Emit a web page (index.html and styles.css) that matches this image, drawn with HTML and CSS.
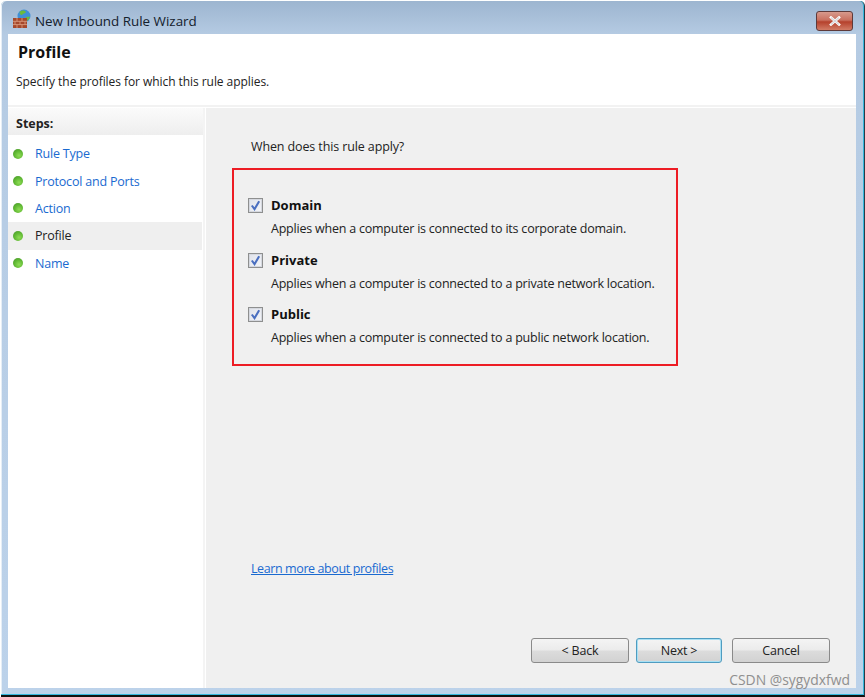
FILE: index.html
```html
<!DOCTYPE html>
<html lang="en">
<head>
<meta charset="utf-8">
<title>New Inbound Rule Wizard</title>
<link rel="stylesheet" href="styles.css">
</head>
<body>
<div class="window">
  <div class="titlebar">
    <svg class="app-icon" width="20" height="20" viewBox="0 0 20 20">
      <circle cx="12" cy="7" r="6.500" fill="#3f8fd8"/>
      <path d="M8 2.500c2-1.500 5-1 6 .5-1 2-3 1-4 3-1.500 0-3-1.500-2-3.500z" fill="#6cbb3c"/>
      <path d="M14 8c2-.500 3.500 0 4-.500-.500 2.500-2 4-3.500 4.500-1-1-1.500-2.500-.5-4z" fill="#6cbb3c"/>
      <rect x="1" y="9" width="14" height="10" fill="#a5482c"/>
      <path d="M1 12.300h14M1 15.600h14M5 9v3.300M10 9v3.300M3 12.300v3.300M8 12.300v3.300M13 12.300v3.300M5 15.600v3.400M10 15.600v3.400" stroke="#e0a184" stroke-width=".8" fill="none"/>
    </svg>
    <span class="title">New Inbound Rule Wizard</span>
    <div class="close">
      <svg width="14" height="10" viewBox="0 0 14 10"><path d="M3 1.500l8 7M11 1.500l-8 7" stroke="#fff" stroke-width="2.600" stroke-linecap="square" fill="none"/><path d="M3 1.500l8 7M11 1.500l-8 7" stroke="#d8d8dc" stroke-width="1.200" fill="none"/></svg>
    </div>
  </div>
  <div class="client">
    <header class="header">
      <h1 class="heading">Profile</h1>
      <p class="subheading">Specify the profiles for which this rule applies.</p>
    </header>
    <div class="body">
      <nav class="sidebar">
        <div class="steps-title">Steps:</div>
        <ul class="steps">
          <li class="step"><i class="dot"></i><a class="step-link">Rule Type</a></li>
          <li class="step"><i class="dot"></i><a class="step-link">Protocol and Ports</a></li>
          <li class="step"><i class="dot"></i><a class="step-link">Action</a></li>
          <li class="step current"><i class="dot"></i><span>Profile</span></li>
          <li class="step"><i class="dot"></i><a class="step-link">Name</a></li>
        </ul>
      </nav>
      <main class="main">
        <p class="question">When does this rule apply?</p>
        <div class="options">
          <div class="highlight"></div>
          <div class="option">
            <span class="check"><svg width="11" height="11" viewBox="0 0 9 9"><path d="M1.500 4.500l2.200 3 3.800-6.500" stroke="#4a6fc0" stroke-width="1.700" fill="none"/></svg></span>
            <div><div class="option-name">Domain</div><div class="option-desc">Applies when a computer is connected to its corporate domain.</div></div>
          </div>
          <div class="option">
            <span class="check"><svg width="11" height="11" viewBox="0 0 9 9"><path d="M1.500 4.500l2.200 3 3.800-6.500" stroke="#4a6fc0" stroke-width="1.700" fill="none"/></svg></span>
            <div><div class="option-name">Private</div><div class="option-desc">Applies when a computer is connected to a private network location.</div></div>
          </div>
          <div class="option">
            <span class="check"><svg width="11" height="11" viewBox="0 0 9 9"><path d="M1.500 4.500l2.200 3 3.800-6.500" stroke="#4a6fc0" stroke-width="1.700" fill="none"/></svg></span>
            <div><div class="option-name">Public</div><div class="option-desc">Applies when a computer is connected to a public network location.</div></div>
          </div>
        </div>
        <a class="learn">Learn more about profiles</a>
        <div class="buttons">
          <button class="btn">&lt; Back</button>
          <button class="btn primary">Next &gt;</button>
          <button class="btn">Cancel</button>
        </div>
        <div class="watermark">CSDN @sygydxfwd</div>
      </main>
    </div>
  </div>
</div>
</body>
</html>
```
FILE: styles.css
```css
* { box-sizing: border-box; }
html, body { margin: 0; height: 100%; background: #fff; }
body { font-family: "Open Sans", "Liberation Sans", sans-serif; font-size: 12px; color: #1c1c1c; overflow: hidden; }
.window {
  width: 864px; height: 696px; margin: 1px 0 0 1px;
  background: linear-gradient(#9db5d0 0, #b5cbe3 34px, #bcd2ea 100%);
  border-bottom: 2px solid #111; border-right: 1px solid #2a3a45;
  box-shadow: inset 0 -1px 0 #35b7dc, inset -1px 0 0 #35b7dc, inset 1px 0 0 #e6eef6;
  border-radius: 5px 5px 0 0;
  display: flex; flex-direction: column;
  padding: 0 8px 7px 7px;
}
.titlebar { height: 33px; display: flex; align-items: center; flex: none; }
.app-icon { margin: 2px 3px 0 4px; }
.title { font-size: 13.400px; color: #14202c; margin-top: 6px; }
.close {
  margin-left: auto; margin-right: 3px; margin-top: 7px; width: 37px; height: 20px;
  border: 1px solid #5e3a3a; border-radius: 3px;
  background: linear-gradient(#d79a8d 0, #c9705f 45%, #b5412c 55%, #d27c66 100%);
  display: flex; align-items: center; justify-content: center;
}
.client { flex: 1; display: flex; flex-direction: column; min-height: 0; background: #fff; }
.header { height: 73px; padding: 8px 0 0 10px; flex: none; border-bottom: 2px solid #f2f2f2; }
.heading { margin: 0; font-size: 16px; font-weight: 700; line-height: 20px; color: #111; }
.subheading { margin: 11px 0 0 -2px; font-size: 12px; letter-spacing: -.06px; line-height: 18px; color: #222; }
.body { flex: 1; display: flex; min-height: 0; padding-top: 1px; }
.sidebar { width: 197px; flex: none; background: #fff; border-right: 2px solid #f4f4f4; }
.steps-title { height: 27px; background: linear-gradient(#fbfbfb, #eeeeee); padding: 7px 0 0 8px; font-size: 12.500px; font-weight: 700; line-height: 18px; color: #222; }
.steps { list-style: none; margin: 5px 0 0; padding: 0; }
.step { height: 27.400px; display: flex; align-items: center; width: 194px; padding-left: 5px; font-size: 12.500px; letter-spacing: -.2px; }
.current { background: #efefef; color: #222; }
.dot { width: 10px; height: 10px; border-radius: 50%; background: radial-gradient(circle at 60% 65%, #8edc55 0, #5cb531 55%, #4a8f33 100%); margin-right: 12px; flex: none; }
.step-link { color: #1a6ad0; }
.main { flex: 1; background: #f0f0f0; margin-left: 1px; padding: 30px 0 0 45px; position: relative; min-width: 0; }
.question { margin: 0; font-size: 12.500px; letter-spacing: -.12px; line-height: 18px; color: #222; }
.options { margin-top: 39px; width: 440px; }
.highlight { position: absolute; left: 26px; top: 60px; width: 446px; height: 198px; border: 2px solid #ed1c24; }
.option { display: flex; height: 54.500px; align-items: flex-start; }
.check { width: 15px; height: 15px; border: 1px solid #8e8f8f; box-shadow: inset 0 0 0 1px #d5d8df; background: linear-gradient(135deg, #dfe2ea, #f4f5f8); margin: 3px 8px 0 -3px; flex: none; display: flex; align-items: center; justify-content: center; }
.option-name { font-size: 13px; font-weight: 700; line-height: 20px; color: #111; }
.option-desc { font-size: 12.500px; letter-spacing: -.22px; line-height: 18px; margin-top: 5px; color: #222; }
.learn { position: absolute; left: 45px; top: 452px; color: #1a6ad0; text-decoration: underline; font-size: 12.500px; letter-spacing: -.4px; line-height: 18px; }
.buttons { position: absolute; right: 26px; top: 530px; display: flex; }
.btn { width: 98px; height: 25px; border: 1px solid #8a8a8a; border-radius: 3px; background: linear-gradient(#f4f4f4 0, #ebebeb 48%, #dcdcdc 52%, #d2d2d2 100%); font: 12.500px "Open Sans", "Liberation Sans", sans-serif; letter-spacing: -.2px; color: #222; padding: 0; }
.primary { width: 86px; margin: 0 10px 0 7px; border-color: #4f9cc0; box-shadow: inset 0 0 0 1px #a8e0f4; }
.watermark { position: absolute; right: 6px; bottom: -1px; font-size: 13.900px; color: #8f8f8f; line-height: 18px; }
```
